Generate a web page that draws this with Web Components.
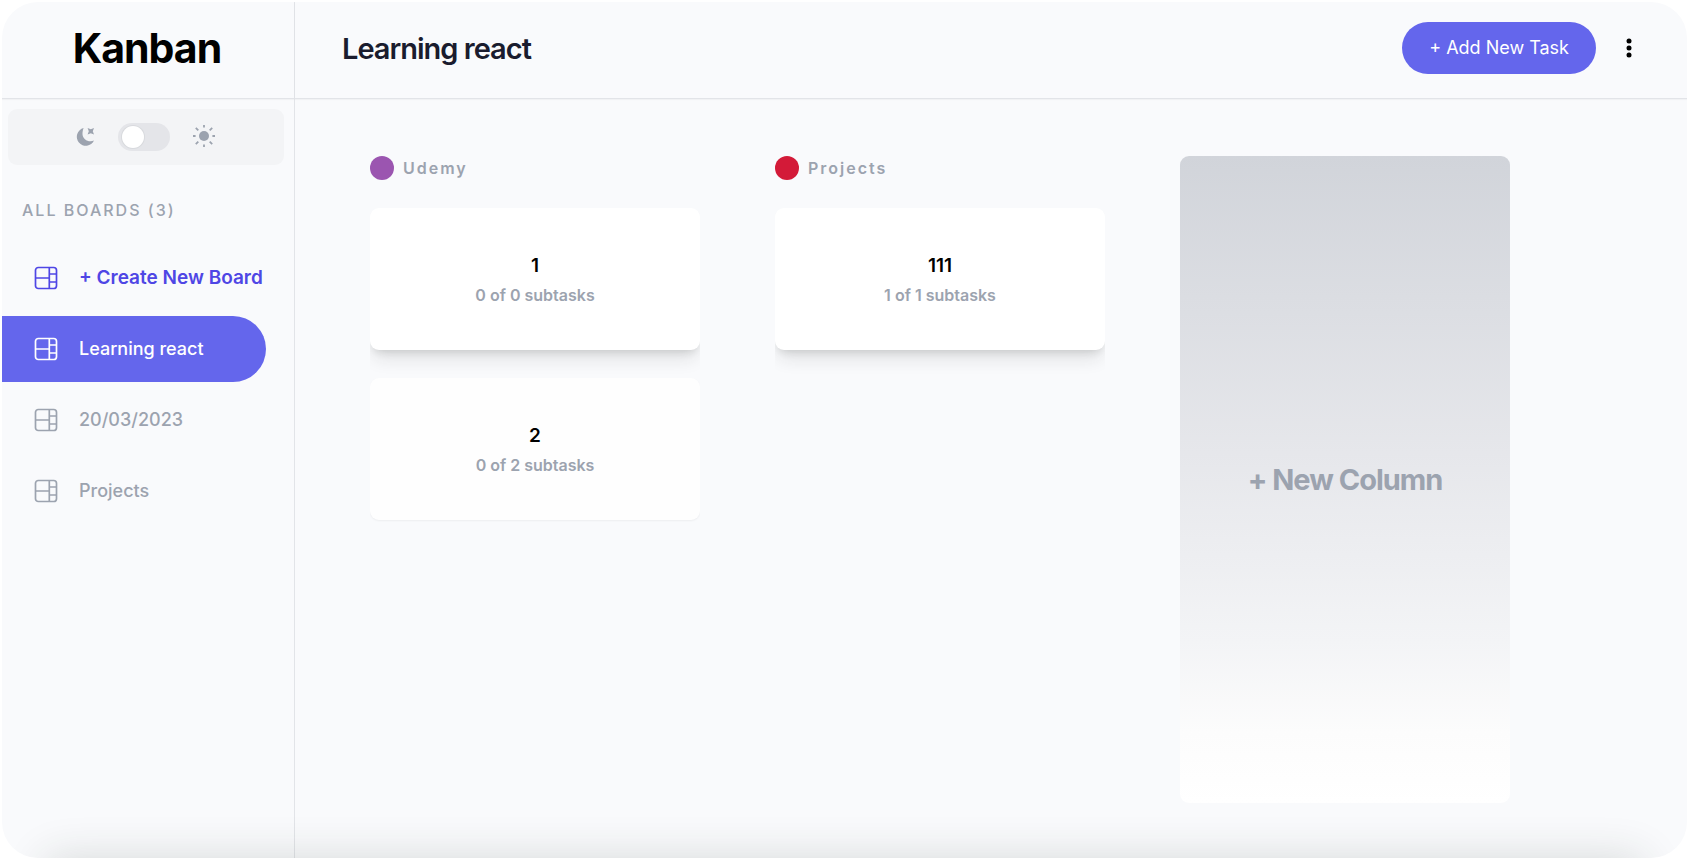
<!DOCTYPE html>
<html lang="en">
<head>
<meta charset="utf-8">
<meta name="viewport" content="width=device-width, initial-scale=1">
<title>Kanban</title>
<style>
  html, body { margin: 0; height: 100%; background: #fff; }
  body { font-family: Inter, "Liberation Sans", sans-serif; color: #000; }
</style>
</head>
<body>
<kanban-app>
  <kanban-sidebar slot="sidebar">
    <theme-switch slot="theme"></theme-switch>
    <board-link variant="create">+ Create New Board</board-link>
    <board-link variant="active">Learning react</board-link>
    <board-link>20/03/2023</board-link>
    <board-link>Projects</board-link>
  </kanban-sidebar>
  <kanban-header slot="header">Learning react</kanban-header>
  <board-column name="Udemy" style="--dot:#9b55b0">
    <task-card subtasks="0 of 0 subtasks" raised>1</task-card>
    <task-card subtasks="0 of 2 subtasks">2</task-card>
  </board-column>
  <board-column name="Projects" style="--dot:#d31a38">
    <task-card subtasks="1 of 1 subtasks" raised>111</task-card>
  </board-column>
  <new-column>+ New Column</new-column>
</kanban-app>

<script>
const reset = `*, *::before, *::after { box-sizing: border-box; }
  button { font: inherit; border: 0; margin: 0; cursor: pointer; }
  h1, h2, h3, p, ul { margin: 0; padding: 0; }`;

const define = (name, css, html) => customElements.define(name, class extends HTMLElement {
  constructor() {
    super();
    this.attachShadow({ mode: 'open' });
  }
  connectedCallback() {
    const markup = typeof html === 'function' ? html(this) : html;
    this.shadowRoot.innerHTML = `<style>${reset}${css}</style>${markup}`;
  }
});

define('kanban-app', `
  :host { display: block; height: 100vh; padding: 2px; box-sizing: border-box; }
  .frame {
    position: relative; height: 100%; overflow: hidden; border-radius: 36px;
    background: #f9fafc; display: grid; grid-template-columns: 293px 1fr;
  }
  .main { display: flex; flex-direction: column; min-width: 0; }
  .board { flex: 1; display: flex; gap: 75px; padding: 57px 75px 55px; min-height: 0; }
  .frame::after {
    content: ""; position: absolute; left: 44px; right: 44px; top: 100%; height: 80px;
    box-shadow: 0 0 44px rgb(40 50 40 / .16); pointer-events: none;
  }
`, `<div class="frame">
    <slot name="sidebar"></slot>
    <div class="main">
      <slot name="header"></slot>
      <main class="board"><slot></slot></main>
    </div>
  </div>`);

define('kanban-sidebar', `
  :host { display: block; box-sizing: border-box; border-right: 1px solid #e2e4e8; }
  .brand {
    height: 97px; padding: 0 2px 4px 0; display: flex; align-items: center; justify-content: center;
    border-bottom: 1px solid #e2e4e8; box-shadow: 0 1px 1px rgb(0 0 0 / .03);
  }
  h1 { font-size: 41px; font-weight: 700; line-height: 48px; letter-spacing: -1px; }
  .theme { padding: 10px 10px 0 6px; }
  h2 { margin: 33px 0 0 20px; font-size: 16px; font-weight: 500; line-height: 24px;
       letter-spacing: 2px; color: #9ca3af; }
  nav { margin-top: 23px; display: flex; flex-direction: column; gap: 5px; }
`, `<div class="brand"><h1>Kanban</h1></div>
  <div class="theme"><slot name="theme"></slot></div>
  <h2>ALL BOARDS (3)</h2>
  <nav aria-label="Boards"><slot></slot></nav>`);

define('theme-switch', `
  :host { display: flex; height: 56px; align-items: center; justify-content: center; gap: 22px;
          padding-right: 4px; box-sizing: border-box; border-radius: 9px;
          background: #f3f4f6; color: #9ca3af; }
  svg { width: 24px; height: 24px; display: block; }
  label { display: block; }
  input { appearance: none; display: block; margin: 0; width: 52px; height: 28px; padding: 3px 4px;
          border-radius: 14px; background: #e4e5e9; cursor: pointer; }
  input::before { content: ""; display: block; width: 22px; height: 22px; border-radius: 50%;
                  background: #fff; box-shadow: 0 0 0 1px #d8dade; }
  input:checked::before { margin-left: 22px; }
`, `<svg viewBox="0 0 24 24" aria-hidden="true">
      <path fill="currentColor" d="M11.600 3.100A9 9 0 1 0 22 15.600c-5.200 2.300-11.300-1-11.500-6.300 0-2.300.3-4.400 1.100-6.200z"/>
      <path fill="currentColor" d="M15.600 3l3.200 1.200L22 3l-1.200 3.200L22 9.400l-3.200-1.200-3.200 1.200 1.200-3.200z"/>
    </svg>
    <label><input type="checkbox" role="switch" aria-label="Light theme"></label>
    <svg viewBox="0 0 24 24" aria-hidden="true" stroke="currentColor" stroke-width="1.800">
      <circle cx="12" cy="11" r="5" fill="currentColor" stroke="none"/>
      <path d="M12 0v2.600M12 19.400V22M1 11h2.600M20.400 11H23M3.800 2.800l2.500 2.500M17.700 16.700l2.500 2.500M20.200 2.800l-2.500 2.500M6.300 16.700l-2.500 2.500"/>
    </svg>`);

define('board-link', `
  :host { display: block; color: #9ca3af; font-size: 18px; font-weight: 500; }
  :host([variant=create]) { color: #4f46e5; font-size: 19px; font-weight: 600; }
  :host([variant=active]) { color: #fff; }
  a { display: flex; align-items: center; gap: 21px; height: 66px; margin-right: 28px; padding-left: 32px;
      border-radius: 0 33px 33px 0; line-height: 24px;
      color: inherit; text-decoration: none; white-space: nowrap; }
  :host([variant=active]) a { background: #6466ec; }
  svg { width: 24px; height: 24px; flex: none; }
`, `<a href="#"><svg viewBox="0 0 24 24" fill="none" stroke="currentColor" stroke-width="1.700" aria-hidden="true">
    <rect x="1.500" y="1.500" width="21" height="21" rx="2.800"/>
    <path d="M15.300 1.500v21M1.500 12h13.800M15.300 8h7.200M15.300 16h7.200"/></svg><slot></slot></a>`);

define('kanban-header', `
  :host { display: flex; align-items: center; justify-content: space-between; box-sizing: border-box;
          height: 97px; padding: 0 46px 4px 47px; border-bottom: 1px solid #e2e4e8;
          box-shadow: 0 1px 1px rgb(0 0 0 / .03); }
  h2 { padding-top: 2px; font-size: 29px; font-weight: 600; line-height: 36px; color: #1a1c2e; letter-spacing: -1px; }
  .actions { display: flex; align-items: center; gap: 21px; }
  .add { height: 52px; padding: 0 27px; border-radius: 26px; background: #6466ec; color: #fff;
         font-size: 18px; line-height: 28px; white-space: nowrap; }
  .more { padding: 0; width: 24px; height: 24px; background: none; color: #000; }
  svg { display: block; width: 24px; height: 24px; }
`, `<h2><slot></slot></h2>
  <div class="actions">
    <button class="add" type="button">+ Add New Task</button>
    <button class="more" type="button" aria-label="Board options">
      <svg viewBox="0 0 24 24" fill="currentColor"><circle cx="12" cy="5" r="2.500"/><circle cx="12" cy="12" r="2.500"/><circle cx="12" cy="19" r="2.500"/></svg>
    </button>
  </div>`);

define('board-column', `
  :host { display: block; flex: 0 0 330px; overflow: hidden; }
  h3 { display: flex; align-items: center; gap: 9px; height: 24px; font-size: 16px; font-weight: 600;
       letter-spacing: 2px; color: #9ca3af; }
  h3::before { content: ""; width: 24px; height: 24px; border-radius: 50%; background: var(--dot); }
  .tasks { display: grid; gap: 28px; margin-top: 28px; }
`, el => `<h3>${el.getAttribute('name')}</h3><div class="tasks"><slot></slot></div>`);

define('task-card', `
  :host { display: flex; flex-direction: column; align-items: center; justify-content: center; gap: 3px;
          height: 142px; box-sizing: border-box; border-radius: 9px; background: #fefefe;
          box-shadow: 0 1px 2px rgb(0 0 0 / .05); text-align: center; }
  :host([raised]) { background: #fff;
          box-shadow: 0 12px 18px -4px rgb(30 35 30 / .12), 0 5px 8px -4px rgb(30 35 30 / .16); }
  h3 { font-size: 19px; font-weight: 600; line-height: 28px; }
  p { font-size: 16px; font-weight: 600; line-height: 24px; color: #9ca3af; }
`, el => `<h3><slot></slot></h3><p>${el.getAttribute('subtasks')}</p>`);

define('new-column', `
  :host { display: flex; flex: 0 0 330px; }
  button { flex: 1; padding: 0; border-radius: 9px; font-size: 29px; font-weight: 700; line-height: 36px;
           letter-spacing: -1px; color: #9ca3af;
           background: linear-gradient(#d1d4da 0%, #e6e7eb 46%, #f3f4f6 75%, #fcfcfc 89%, #fff 100%); }
`, `<button type="button"><slot></slot></button>`);
</script>
</body>
</html>
